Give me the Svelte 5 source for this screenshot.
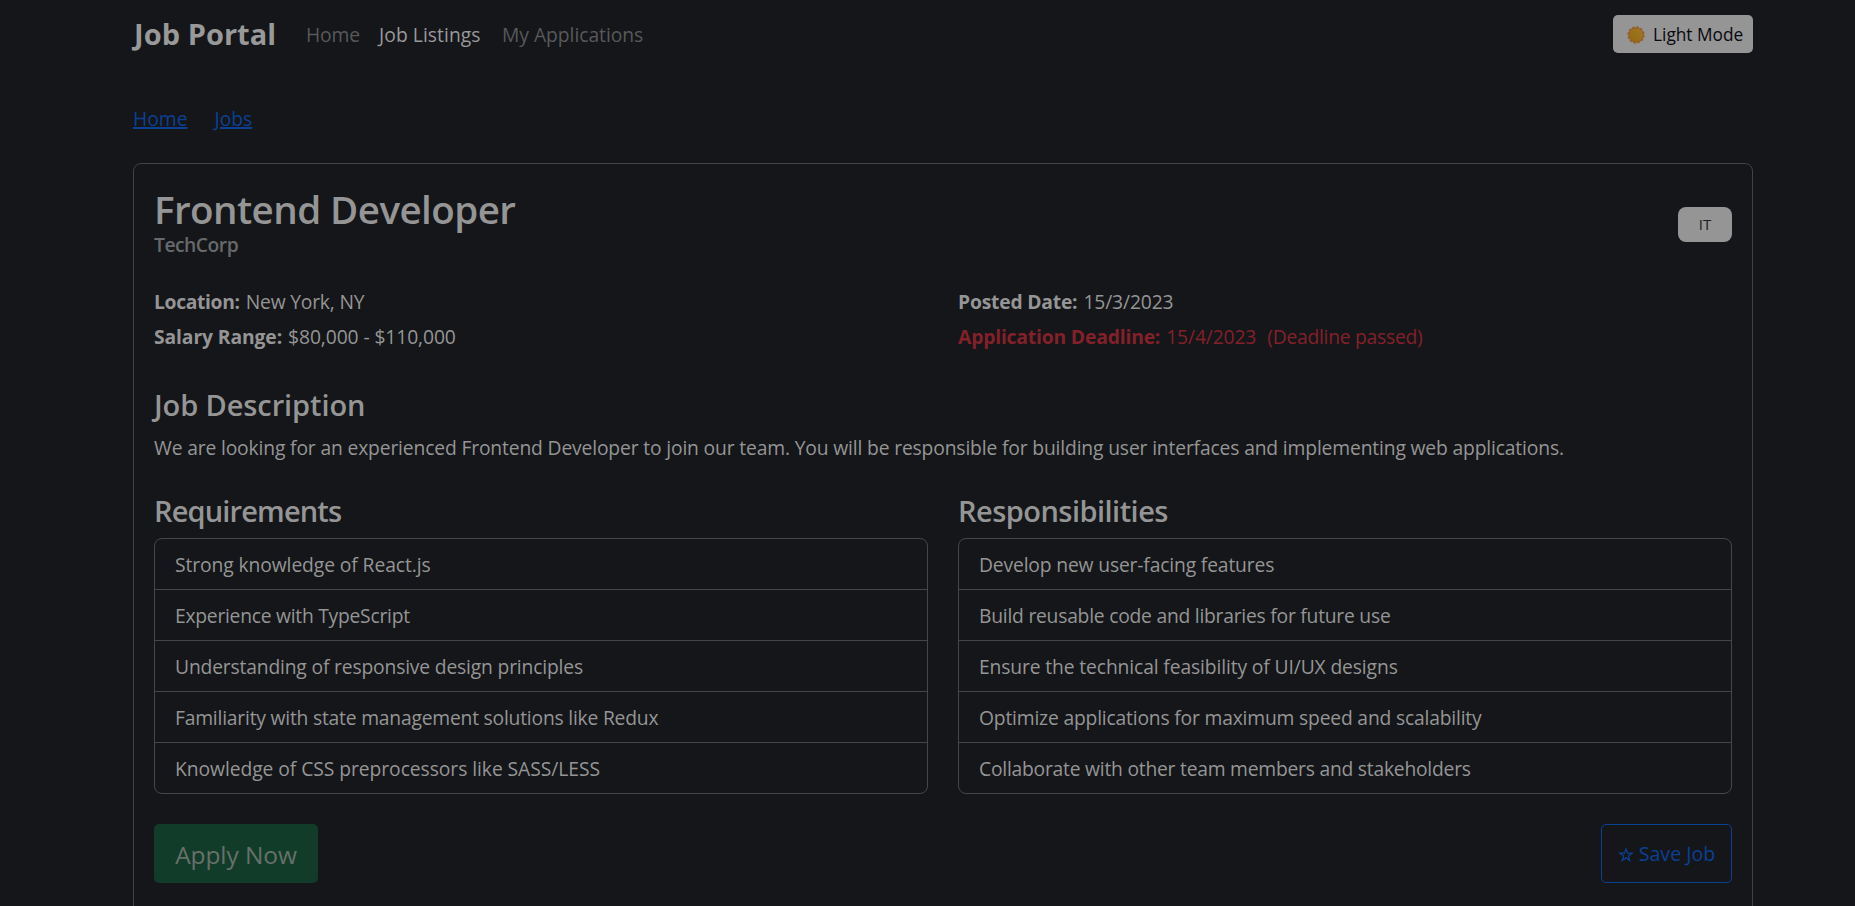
<script>
  const requirements = [
    { text: 'Strong knowledge of React.js', tracking: -0.1 },
    { text: 'Experience with TypeScript', tracking: -0.26 },
    { text: 'Understanding of responsive design principles', tracking: -0.175 },
    { text: 'Familiarity with state management solutions like Redux', tracking: -0.215 },
    { text: 'Knowledge of CSS preprocessors like SASS/LESS', tracking: -0.065 }
  ];
  const responsibilities = [
    { text: 'Develop new user-facing features', tracking: -0.16 },
    { text: 'Build reusable code and libraries for future use', tracking: -0.24 },
    { text: 'Ensure the technical feasibility of UI/UX designs', tracking: -0.13 },
    { text: 'Optimize applications for maximum speed and scalability', tracking: -0.19 },
    { text: 'Collaborate with other team members and stakeholders', tracking: -0.235 }
  ];
</script>

{#snippet list(title, cls, items)}
  <section>
    <h3 class={cls}>{title}</h3>
    <ul class="list">
      {#each items as item}
        <li><span style:letter-spacing="{item.tracking}px">{item.text}</span></li>
      {/each}
    </ul>
  </section>
{/snippet}

<div class="page">
  <nav class="navbar">
    <a class="brand" href="#home">Job Portal</a>
    <div class="links">
      <a class="n1" href="#home">Home</a>
      <a class="n2 active" href="#jobs">Job Listings</a>
      <a class="n3" href="#applications">My Applications</a>
    </div>
    <button class="mode">
      <svg width="18" height="18" viewBox="0 0 18 18">
        <defs>
          <linearGradient id="sun" x1="1" y1="0" x2="0" y2="1">
            <stop offset="0" stop-color="#a07a20" />
            <stop offset="1" stop-color="#936715" />
          </linearGradient>
        </defs>
        <circle cx="9" cy="9" r="7.9" fill="none" stroke="#965f2b" stroke-width="1.5" stroke-dasharray="2.6 1.536" />
        <circle cx="9" cy="9" r="7.7" fill="#965f28" />
        <circle cx="9" cy="9" r="6.6" fill="url(#sun)" />
      </svg>
      <span>Light Mode</span>
    </button>
  </nav>

  <div class="crumbs"><a href="#home">Home</a><a href="#jobs">Jobs</a></div>

  <main class="card">
    <header>
      <div>
        <h1>Frontend Developer</h1>
        <h6>TechCorp</h6>
      </div>
      <span class="badge">IT</span>
    </header>

    <div class="columns facts">
      <div>
        <p><strong class="loc">Location:</strong><span class="city">New York, NY</span></p>
        <p><strong class="sal">Salary Range:</strong><span class="pay">$80,000 - $110,000</span></p>
      </div>
      <div>
        <p><strong class="posted">Posted Date:</strong><span class="date">15/3/2023</span></p>
        <p class="danger"><strong class="due">Application Deadline:</strong><span class="date">15/4/2023</span><span class="passed">(Deadline passed)</span></p>
      </div>
    </div>

    <h3 class="desc-title">Job Description</h3>
    <p class="desc">We are looking for an experienced Frontend Developer to join our team. You will be responsible for building user interfaces and implementing web applications.</p>

    <div class="columns lists">
      {@render list('Requirements', 'req', requirements)}
      {@render list('Responsibilities', 'resp', responsibilities)}
    </div>

    <footer>
      <button class="apply" disabled>Apply Now</button>
      <button class="save">
        <svg width="16" height="16" viewBox="0 0 16 16">
          <path d="M8 1.8 L9.5 6.2 H14.2 L10.4 9 L11.8 13.6 L8 10.8 L4.2 13.6 L5.6 9 L1.8 6.2 H6.5 Z" fill="none" stroke="currentColor" stroke-width="1.2" />
        </svg>
        <span>Save Job</span>
      </button>
    </footer>
  </main>
</div>

<style>
  :global(body) {
    background: #141619;
    overflow: hidden;
  }
  .page {
    box-sizing: border-box;
    height: 906px;
    overflow: hidden;
    padding: 0 102px 0 133px;
    background: #141619;
    color: #959595;
    font: 19.3px/30px 'Open Sans', 'Noto Sans', sans-serif;
  }
  h1, h3, h6, p, ul { margin: 0; padding: 0; }
  h1, h3, h6 { font-weight: 600; }
  a { color: inherit; text-decoration: none; }
  button { font: inherit; border: 0; padding: 0; margin: 0; }

  .navbar { display: flex; align-items: center; height: 68px; }
  .brand {
    box-sizing: border-box;
    width: 173px;
    padding: 0 0 1px 1px;
    color: #999;
    font-size: 29px;
    line-height: 44px;
    font-weight: 700;
    letter-spacing: 0.05px;
  }
  .links { display: flex; flex: 1; gap: 20px; padding-top: 2px; color: #58595b; }
  .links .active { color: #999; }
  .n1 { width: 53px; letter-spacing: -0.12px; }
  .n2 { width: 103px; letter-spacing: 0.05px; }
  .n3 { letter-spacing: -0.04px; }
  .mode {
    display: flex;
    align-items: center;
    box-sizing: border-box;
    width: 140px;
    height: 38px;
    padding-left: 14px;
    gap: 8px;
    border-radius: 5px;
    background: #959596;
    color: #08090b;
    font-size: 17.3px;
    line-height: 26px;
    white-space: nowrap;
  }
  .mode svg { margin-top: 2px; }
  .mode span { padding-top: 2px; }

  .crumbs { display: flex; gap: 27px; padding-top: 36px; height: 59px; }
  .crumbs a {
    color: #0b4093;
    text-decoration: underline;
    text-decoration-thickness: 2px;
    text-underline-offset: 1px;
  }

  .card {
    box-sizing: border-box;
    height: 780px;
    padding: 20px;
    border: 1px solid #404346;
    border-radius: 8px;
  }
  header { display: flex; justify-content: space-between; align-items: center; height: 81px; }
  header > div { box-sizing: border-box; height: 81px; padding-top: 1px; }
  h1 { font-size: 38.6px; line-height: 48px; letter-spacing: -0.58px; color: #959595; }
  h6 { font-size: 19.3px; line-height: 24px; letter-spacing: -0.5px; color: #68696b; }
  .badge {
    width: 54px;
    height: 35px;
    border-radius: 8px;
    background: #959596;
    color: #1a1c1e;
    font-size: 15px;
    line-height: 34px;
    text-align: center;
  }

  .columns { display: grid; grid-template-columns: 1fr 1fr; gap: 30px; }
  .facts { margin-top: 22px; }
  .facts p { display: flex; height: 30px; margin-bottom: 5px; }
  .facts span { margin-left: 6px; }
  .loc { letter-spacing: -0.34px; }
  .city { letter-spacing: -0.2px; }
  .sal { letter-spacing: -0.1px; }
  .pay { letter-spacing: -0.1px; }
  .posted { letter-spacing: -0.2px; }
  .date { letter-spacing: -0.14px; }
  .due { letter-spacing: -0.17px; }
  .facts .passed { margin-left: 11px; letter-spacing: -0.26px; }
  .danger { color: #842029; }

  h3 { font-size: 29px; line-height: 36px; }
  .desc-title { margin-top: 30px; letter-spacing: -0.1px; }
  .desc { margin-top: 10px; letter-spacing: -0.158px; white-space: nowrap; }
  .lists { margin-top: 30px; }
  .req { letter-spacing: -0.85px; }
  .resp { letter-spacing: -0.53px; }
  .list {
    margin-top: 9px;
    border: 1px solid #44474a;
    border-radius: 8px;
    list-style: none;
  }
  .list li { height: 30px; padding: 11px 20px 9px; white-space: nowrap; }
  .list li + li { border-top: 1px solid #44474a; }

  footer { display: flex; justify-content: space-between; margin-top: 30px; }
  .apply {
    width: 164px;
    height: 59px;
    padding-top: 2px;
    border-radius: 5px;
    background: #113c29;
    color: #677069;
    font-size: 24.5px;
    letter-spacing: -0.1px;
  }
  .save {
    display: flex;
    align-items: center;
    justify-content: center;
    gap: 5px;
    width: 131px;
    height: 59px;
    border: 1px solid #0b4093;
    border-radius: 5px;
    background: none;
    color: #0b4093;
    box-sizing: border-box;
    font-size: 19.6px;
  }
  .save svg { margin-top: 3px; }
  .save span { padding-top: 1px; }
</style>
